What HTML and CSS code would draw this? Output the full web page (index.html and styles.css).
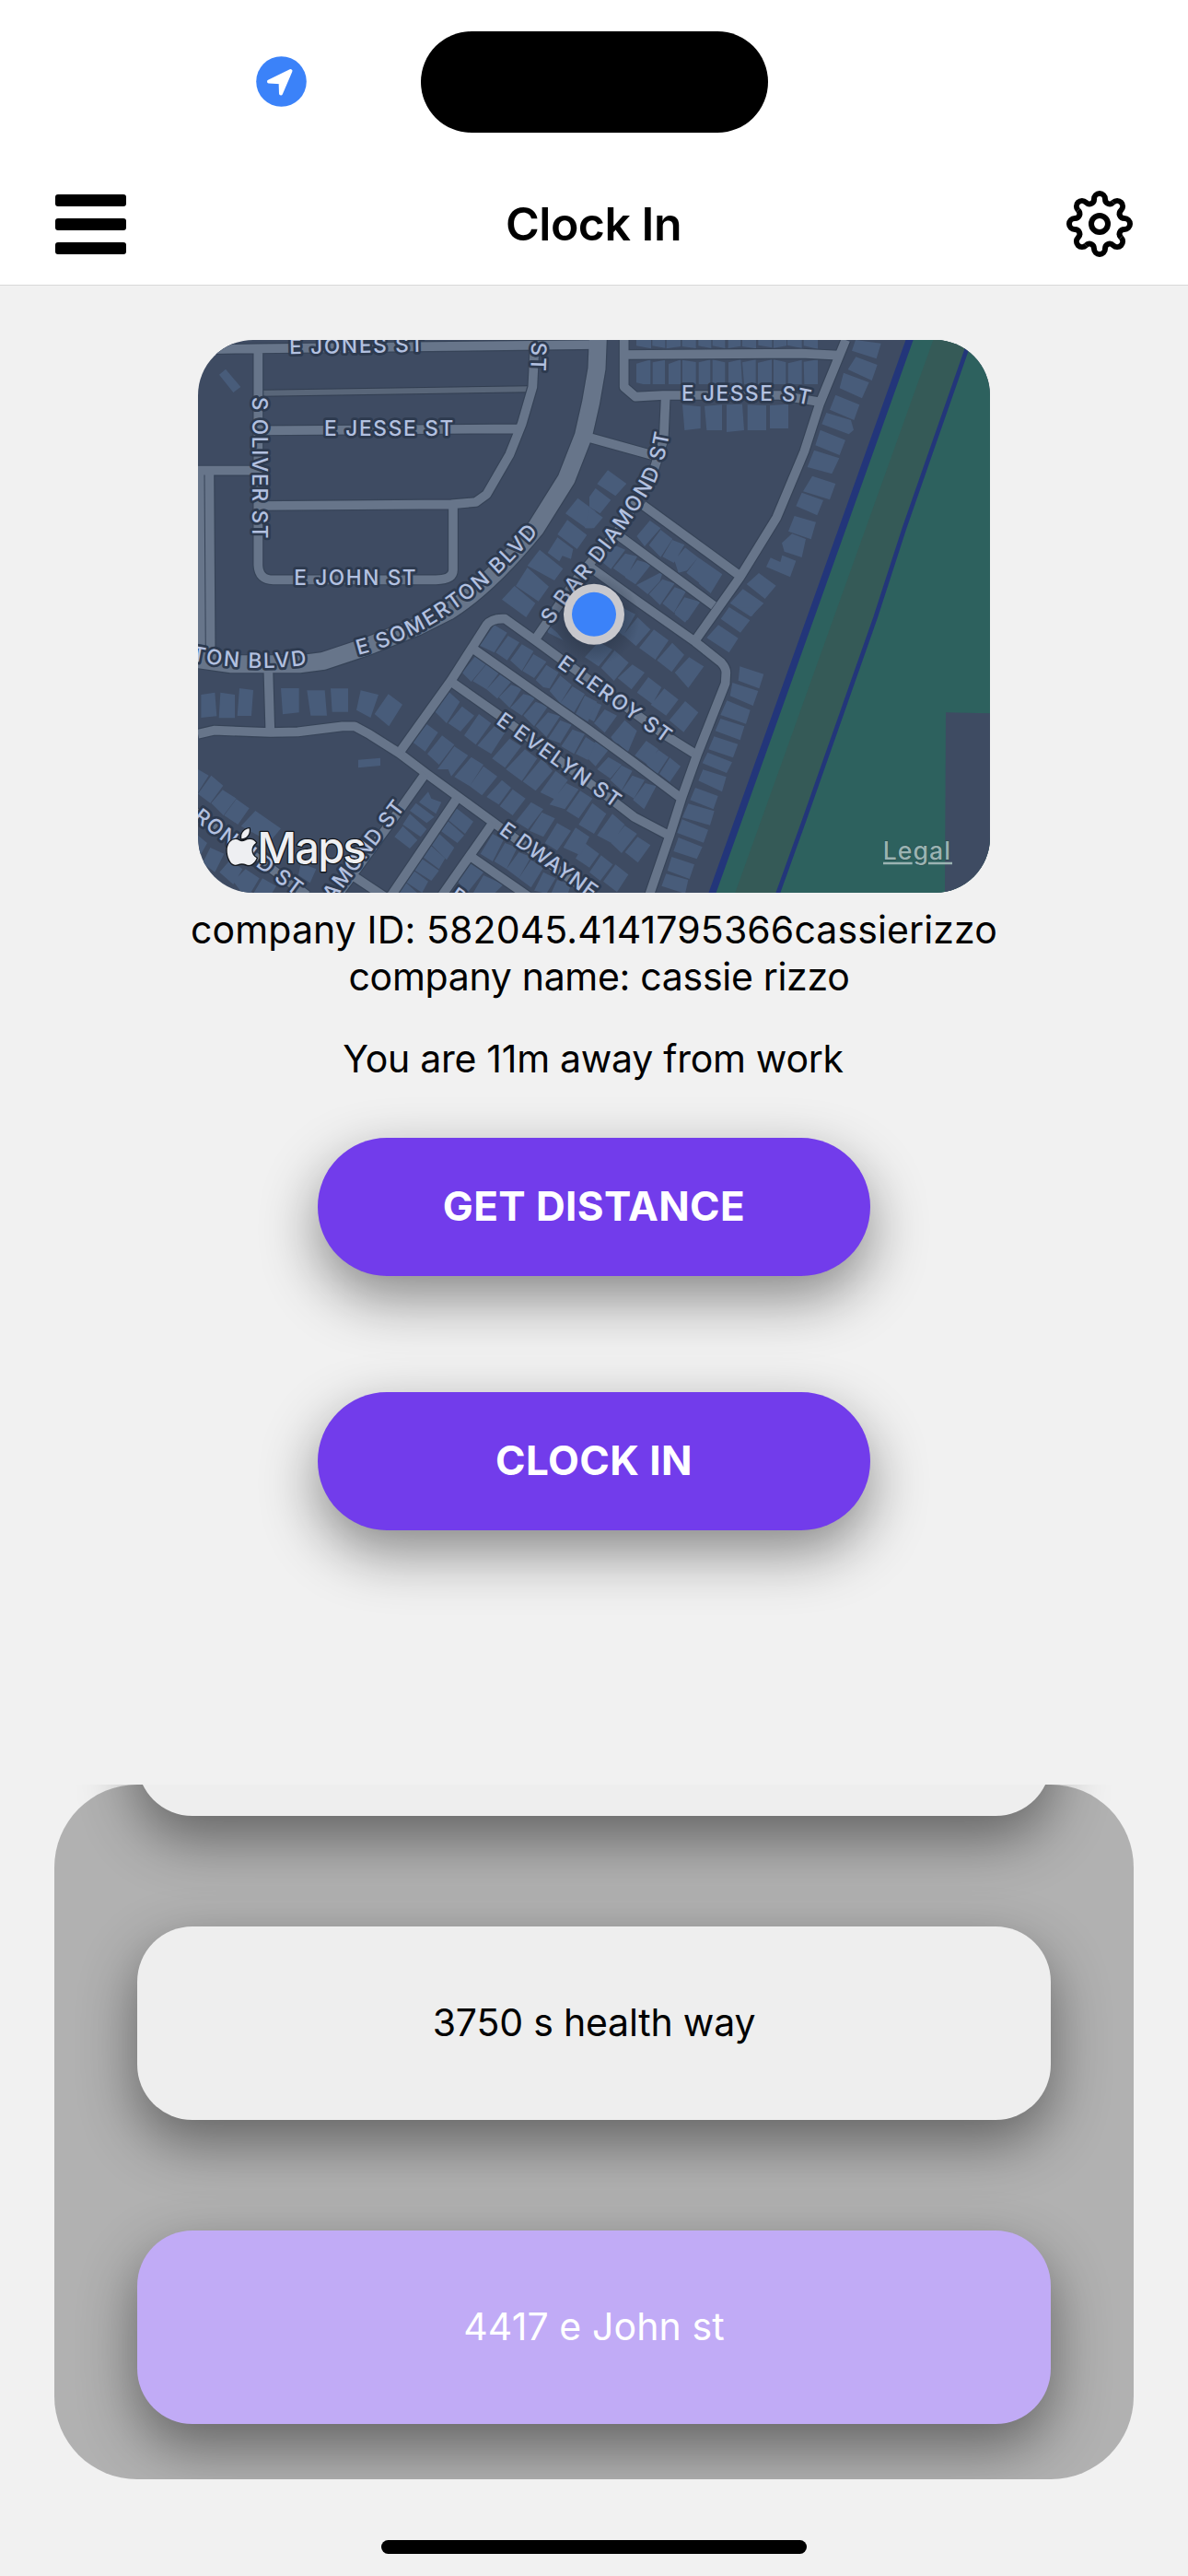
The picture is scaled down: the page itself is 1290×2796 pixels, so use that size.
FILE: index.html
```html
<!DOCTYPE html>
<html lang="en">
<head>
<meta charset="utf-8">
<title>Clock In</title>
<link rel="stylesheet" href="styles.css">
</head>
<body>
<div class="screen">
  <header class="top">
    <div class="status">
      <svg class="location" viewBox="0 0 55 55"><circle cx="27.5" cy="27.5" r="27.3"/><path d="M37.5 16 14 27.5 26.6 28.3 27 40.5Z"/></svg>
      <div class="island"></div>
    </div>
    <nav class="bar">
      <div class="menu"><span></span><span></span><span></span></div>
      <h1 class="title">Clock In</h1>
      <svg class="gear" viewBox="-36 -36 72 72">
        <defs><path id="tooth" d="M-6-27A6 6 0 0 1 6-27C6-22 11.4-19.8 14.9-23.3"/></defs>
        <use href="#tooth"/><use href="#tooth" transform="rotate(45)"/><use href="#tooth" transform="rotate(90)"/><use href="#tooth" transform="rotate(135)"/>
        <use href="#tooth" transform="rotate(180)"/><use href="#tooth" transform="rotate(225)"/><use href="#tooth" transform="rotate(270)"/><use href="#tooth" transform="rotate(315)"/>
        <circle r="9"/>
      </svg>
    </nav>
  </header>

  <main class="content">
    <svg class="map" viewBox="45 27 2580 1800">
      <defs>
        <g id="streets">
          <path d="M45 58 240 55 1348 42M241 60V760Q243 808 290 808H820Q876 808 876 775V565M241 322 1090 316M45 452H241M241 567 870 562 950 555 985 530 1060 400 1100 300 1135 180 1142 40"/>
          <path d="M82 462 86 1050M50 462 54 1050M274 1100 280 1300M45 1310 97 1298 280 1305 370 1303 515 1285H555L605 1312 700 1372 790 1440 1010 1600 1330 1835"/>
          <path d="M705 1365 870 1135 985 955Q1003 932 1045 935L1150 1010 1560 1310 1665 1375M1145 1000 1200 920 1290 790 1420 640 1530 450 1562 350 1568 215M1320 345 1525 402"/>
          <path d="M1433 27V180L1470 212 1560 207H1940L2065 228M1433 75 2010 71 2130 77M2155 27 2070 235 2020 390 1930 605 1810 800 1665 1005M1495 565 1810 795M1410 660 1725 892"/>
          <path d="M1320 765 1480 880 1665 1010 1750 1078Q1765 1095 1765 1110L1763 1145 1670 1380 1620 1520 1582 1640 1515 1835M945 1035 1320 1298 1460 1400 1620 1520M870 1140 1020 1245 1400 1530 1465 1580 1582 1642"/>
          <path d="M785 1440 700 1560 500 1835M885 1525 675 1835M1005 1600 840 1835M935 1710 1120 1838M30 1560 400 1835M555 1775 650 1838"/>
        </g>
        <path id="boulevard" d="M1348 20 1344 120 1325 230 1300 340 1245 480 1145 640Q990 830 860 910L760 960 590 1027 455 1072 380 1082H150L40 1066"/>
        <path id="p-jesse" d="M1620 224H1900Q1970 222 2050 243"/>
        <path id="p-somerton" d="M567 1053C760 1005 960 880 1160 645"/>
        <path id="p-blvd" d="M22 1071Q230 1113 420 1081"/>
        <path id="p-diamond" d="M1196 956 1259 868Q1444 650 1534 490 1570 410 1583 318"/>
        <radialGradient id="glow"><stop offset=".6" stop-color="#1d2838" stop-opacity=".32"/><stop offset="1" stop-color="#1d2838" stop-opacity="0"/></radialGradient>
      </defs>

      <rect class="land" x="45" y="27" width="2580" height="1800"/>
      <path class="park" d="M2363 27H2625V1827H1720Z"/>
      <path class="levee" d="M2440 27H2560L2447 350 2346 640 2250 930 2150 1220 2020 1590 1935 1827H1795Z"/>
      <path class="land" d="M2481 1240 2625 1243V1827H2478Z"/>
      <path class="canal wide" d="M2367 15 2046 916 1716 1840"/>
      <path class="canal" d="M2564 15 2447 350 2346 640 2252 930 2150 1220 2020 1590 1930 1840"/>

      <g class="buildings">
        <path d="M135 122 184 180 160 198 114 140ZM1282 542 1340 585 1330 640H1310L1242 592ZM1248 613 1312 662 1280 708 1216 660ZM1216 670 1267 708 1260 740 1232 730 1222 748 1184 720ZM1158 710 1234 772 1206 810 1118 762ZM1118 768 1188 830 1154 878 1080 828ZM1076 828 1144 884 1114 930 1035 872Z"/>
        <path transform="translate(1320)" d="M153 27H201V55L153 46ZM205 27H247V53L205 46ZM251 27H297V48L251 55ZM302 27H347V54L302 48ZM355 27H397V54L355 46ZM401 27H442V54L401 46ZM452 27H493V47L452 54ZM498 27H543V55L498 48ZM550 27H595V52L550 44ZM600 27H642V46L600 53ZM645 27H692V54L645 44ZM698 27H744V56L698 46ZM153 104 199 91V171H175L153 166ZM206 100 246 92V171H206ZM258 105 297 91V171H258ZM303 92 347 99V171H303ZM356 100 394 91V171H356ZM401 91 442 100V171H401ZM453 100 493 91 498 171 453 165ZM498 100 542 91V171H504ZM549 101 594 91V171H549ZM600 91 640 99V171H600ZM647 103 692 92V171H647ZM698 98 744 91V171H700Z"/>
        <path transform="translate(1320)" d="M303 238 362 244V315L310 321ZM375 242 432 238V321H382ZM447 238 498 236 504 321 447 327ZM515 238 576 240V321H515ZM588 240 648 236V315H588ZM867 27 950 38 935 88 855 62ZM868 82 938 108 920 159 842 123ZM828 134 911 165 888 217 815 184ZM802 206 880 238 862 288 783 254ZM772 264 852 288 861 320 845 334 757 301ZM752 320 834 353 815 402 736 370ZM732 386 814 412 790 463 710 441ZM726 470 802 495 783 547 696 520ZM692 524 762 549 742 598 673 568ZM668 600 738 620 722 676 648 650ZM660 658 705 675 692 735 635 716 627 688ZM590 736 622 750 628 728 673 746 654 799 576 766ZM552 786 608 827 572 870 512 822ZM500 838 568 884 525 928 458 884ZM60 451 121 495 85 535 25 496ZM20 510 70 548 35 592 0 570V538ZM0 572 44 605 15 640H-15Z"/>
        <path transform="translate(1320)" d="M197 615 232 640 180 699 154 666ZM232 645 271 675 232 734 194 695ZM270 678 310 694 275 753 238 733ZM312 703 354 735 318 778 290 785 277 745ZM354 735 388 758 358 818 316 785ZM388 758 433 790 395 852 356 820ZM70 690 117 710 70 773 35 745ZM117 722 156 732 120 800 77 770ZM156 744 202 757 150 823 116 800ZM240 780 230 812 190 855 153 825ZM238 806 278 820 230 890 194 855ZM278 832 315 845 275 915 238 885ZM310 865 361 880 320 940 276 915Z"/>
        <path transform="translate(1320 900)" d="M490 190 568 215 553 262 485 236ZM466 243 550 270 533 318 458 286ZM448 301 524 332 510 377 427 348ZM427 360 505 385 491 430 410 400ZM406 418 484 443 468 487 388 460ZM385 470 465 502 447 537 368 505ZM370 526 446 550 432 598 355 562ZM345 585 419 612 404 655 328 625ZM322 637 407 661 393 707 303 682ZM302 688 387 722 372 764 286 732ZM290 747 368 778 350 817 274 792ZM268 810 342 835 326 882 254 855ZM250 865 322 885 312 930 235 905ZM455-3 523 40 492 80 428 35ZM485-2H552L528 28ZM420 55 485 98 455 145 382 97ZM285 0H345L312 47 278 20Z"/>
        <path transform="translate(1320 900)" d="M157 30 199 70 152 124 110 88ZM110 0 150 20 110 90 75 60ZM210 70 258 105 215 168 162 130ZM270 113 309 152 268 208 220 170ZM325 160 373 190 322 260 278 210ZM30 110 75 135 30 190-15 160ZM82 138 128 178 80 237 38 195ZM140 184 180 210 137 265 92 228ZM192 225 235 258 205 312 155 275ZM244 262 290 298 250 350 200 315ZM312 303 355 340 307 404 260 365ZM0 300 40 315 15 370-20 350ZM50 330 90 350 50 406 15 375ZM115 365 155 400 125 470 92 440 88 450 70 420ZM185 432 225 460 190 510 148 480ZM225 462 258 485 220 543 186 510ZM262 487 297 515 262 566 228 540Z"/>
        <path transform="translate(1320 900)" d="M20 435 62 462 20 515-15 480ZM62 485 105 510 68 555 25 525ZM105 512 140 530 105 593 68 560ZM140 545 180 560 145 620 105 595ZM182 570 218 580 178 655 142 625ZM10 635 55 670 15 735-35 705ZM75 670 115 705 72 765 25 740ZM115 708 155 735 105 798 70 765ZM157 745 199 772 158 829 116 795ZM-15 765 32 800 0 845-45 815ZM38 805 76 835 35 888 0 860ZM85 835 127 868 90 925 45 890Z"/>
        <path transform="translate(0 900)" d="M55 282 100 275 106 352 55 357ZM118 275 165 282V358H113ZM180 261 225 267 219 351H173ZM315 261H374V340L321 346ZM400 268H458L465 350H412ZM477 262H534V338H482ZM575 268 633 282 607 357 561 332ZM665 280 711 314 667 385 620 345ZM567 494 639 488V513L567 520ZM45 525 80 545 45 600ZM88 545 127 578 85 635 45 605ZM125 592 170 620 128 675 88 635ZM170 622 212 652 175 705 130 675ZM232 660 275 690 240 740 185 710ZM275 690 315 718 280 760 240 740ZM45 740 75 765 50 810ZM85 780 130 800 100 860 60 830ZM150 820 190 850 160 900 115 860ZM200 850 245 880 215 930H190L160 890ZM255 880 300 905 285 930H225ZM380 830 430 850 410 895 372 870Z"/>
        <path transform="translate(0 900)" d="M1010 55 1052 80 1010 145 963 122ZM1055 90 1092 112 1052 170 1015 145ZM1100 118 1138 140 1100 205 1062 170ZM1138 150 1180 175 1140 228 1102 205ZM1180 185 1220 210 1190 262 1170 258 1145 235ZM1225 220 1262 250 1225 310 1190 270ZM1265 255 1305 280 1270 340 1225 310ZM1305 285 1345 305 1315 370 1275 345ZM950 155 985 180 935 240 905 210ZM985 182 1030 205 985 265 940 238ZM1030 215 1065 240 1020 295 985 265ZM1065 250 1100 262 1060 325 1025 290ZM1105 280 1145 290 1100 350 1062 325ZM1145 305 1185 320 1140 385 1105 350ZM1185 340 1225 352 1180 420 1145 385ZM1225 365 1262 380 1225 440 1185 425ZM1265 395 1305 410 1270 475 1228 450ZM1308 420 1340 440 1315 495 1275 475Z"/>
        <path transform="translate(0 900)" d="M862 272 898 305 855 375 815 335ZM905 320 945 350 900 402 860 375ZM960 345 1000 375 950 445 912 415ZM1010 385 1045 405 1000 475 955 448ZM1060 425 1098 450 1045 520 1003 490ZM1110 460 1150 490 1100 563 1048 525ZM1165 490 1200 530 1145 595 1103 565ZM1210 530 1250 560 1205 622 1160 600ZM1245 570 1285 590 1240 655 1190 640ZM1290 595 1330 620 1285 685 1245 660ZM790 378 827 405 785 467 742 435ZM840 415 880 445 830 510 792 475ZM880 450 925 480 870 548 860 525 825 525ZM935 485 975 510 930 580 880 550ZM975 515 1020 548 970 610 930 580ZM1035 560 1065 585 1025 640 985 615ZM1070 590 1112 620 1070 675 1028 645ZM1130 632 1170 655 1120 720 1080 695ZM1165 665 1208 685 1170 745 1125 725ZM1215 700 1260 725 1215 790 1175 765ZM1275 715 1320 745 1290 805 1235 780Z"/>
        <path transform="translate(0 900)" d="M795 598 805 620 838 632 820 670 765 632ZM755 635 815 680 790 700 735 660ZM735 670 790 720 770 745 712 705ZM712 710 760 755 735 783 685 745ZM885 650 942 695 915 735 860 690ZM855 690 912 740 890 765 835 725ZM825 730 880 780 855 820 800 765ZM800 770 850 815 830 850 770 805ZM765 810 830 855 805 888 745 850ZM740 850 795 890 775 927 720 890ZM720 892 760 928H685ZM1005 735 1040 755 1005 825 965 800ZM1045 765 1085 780 1050 850 1010 825ZM1090 795 1130 810 1090 880 1050 850ZM1130 820 1170 845 1130 910 1090 880ZM1170 860 1210 880 1180 930 1140 920ZM930 830 975 860 920 930 885 880ZM975 870 1040 900 1010 930H940ZM1215 885 1260 900 1250 930H1195ZM1175 45 1215 80 1235 105 1185 80Z"/>
      </g>

      <path class="alley-edge" d="M255 200 1125 187"/><path class="alley" d="M255 200 1125 187"/>
      <g class="casing"><use href="#streets"/><use class="blvd-casing" href="#boulevard"/></g>
      <g class="road"><use href="#streets"/><use class="blvd" href="#boulevard"/></g>

      <g class="labels">
        <text transform="translate(343 73) rotate(-1)" textLength="438">E JONES ST</text>
        <text transform="translate(1132 34) rotate(92)" textLength="94">ST</text>
        <text transform="translate(223 212) rotate(90)" textLength="462">S OLIVER ST</text>
        <text x="456" y="338" textLength="421">E JESSE ST</text>
        <text x="358" y="825" textLength="397">E JOHN ST</text>
        <text><textPath href="#p-jesse" textLength="418">E JESSE ST</textPath></text>
        <text><textPath href="#p-somerton" textLength="722">E SOMERTON BLVD</textPath></text>
        <text><textPath href="#p-blvd" textLength="380">TON BLVD</textPath></text>
        <text><textPath href="#p-diamond" textLength="742">S BAR DIAMOND ST</textPath></text>
        <text transform="translate(1213 1090) rotate(35.4)" textLength="434">E LEROY ST</text>
        <text transform="translate(1013 1275) rotate(35.5)" textLength="478">E EVELYN ST</text>
        <text transform="translate(1023 1632) rotate(35.6)" textLength="372">E DWAYNE</text>
        <text transform="translate(28 1587) rotate(36.8)" textLength="420">RONALD ST</text>
        <text transform="translate(484 1857) rotate(-52.5)" textLength="389">AMOND ST</text>
        <text transform="translate(862 1846) rotate(35)">R</text>
      </g>

      <circle class="marker-shadow" cx="1335" cy="935" r="150"/>
      <circle class="marker-ring" cx="1335" cy="920.5" r="99"/>
      <circle class="marker" cx="1335" cy="920.5" r="72"/>

      <g class="brand">
        <path d="M187 1651C184 1633 196 1620 212 1618 215 1635 204 1650 187 1651ZM188 1660C196 1660 202 1653 214 1653 223 1653 230 1658 234 1664 214 1678 217 1705 236 1714 231 1726 222 1737 211 1737 202 1737 199 1732 188 1732 177 1732 173 1737 165 1736 150 1735 140 1708 140 1690 140 1667 153 1653 168 1653 176 1653 182 1660 188 1660Z"/>
        <text x="238" y="1732" textLength="355">Maps</text>
      </g>
      <g class="legal">
        <text x="2276" y="1720" textLength="220">Legal</text>
        <path d="M2277 1731H2372M2424 1731H2502"/>
      </g>
    </svg>

    <div class="company">
      <p class="company-id">company ID: 582045.4141795366cassierizzo</p>
      <p class="company-name">company name: cassie rizzo</p>
    </div>
    <p class="distance">You are 11m away from work</p>
    <div class="actions">
      <button class="action">GET DISTANCE</button>
      <button class="action">CLOCK IN</button>
    </div>
  </main>

  <section class="places">
    <div class="panel">
      <div class="place"></div>
      <div class="place">3750 s health way</div>
      <div class="place selected">4417 e John st</div>
    </div>
  </section>
  <div class="home"></div>
</div>
</body>
</html>
```
FILE: styles.css
```css
* { box-sizing: border-box; }
body { margin: 0; background: #f1f1f1; color: #000; font-family: Inter, "Liberation Sans", sans-serif; }
p, h1 { margin: 0; }
.screen { width: 1290px; height: 2796px; overflow: hidden; display: flex; flex-direction: column; align-items: center; }

.top { width: 100%; height: 310px; background: #fff; border-bottom: 1px solid #d8d8d8; }
.status { height: 177px; padding: 34px 0 0 278px; display: flex; gap: 124px; }
.location { width: 55px; height: 55px; margin-top: 27px; }
.location circle { fill: #3b82f9; }
.location path { fill: #fff; stroke: #fff; stroke-width: 4; stroke-linejoin: round; }
.island { width: 377px; height: 110px; border-radius: 55px; background: #000; }
.bar { height: 131px; padding: 0 60px; display: grid; grid-template-columns: 77px 1fr 72px; align-items: center; }
.menu { display: flex; flex-direction: column; gap: 13px; padding-top: 2px; }
.menu span { height: 13px; border-radius: 3px; background: #000; }
.title { font-size: 50px; font-weight: 600; line-height: 60px; text-align: center; letter-spacing: -.5px; padding-right: 6px; }
.gear { width: 72px; height: 72px; fill: none; stroke: #000; stroke-width: 6; }

.content { display: flex; flex-direction: column; align-items: center; padding-top: 59px; }
.map { display: block; width: 860px; height: 600px; border-radius: 60px; overflow: hidden; }
.land { fill: #3e4b62; }
.park { fill: #2d615e; }
.levee { fill: #355a57; }
.canal { fill: none; stroke: #23367a; stroke-width: 14; }
.wide { stroke-width: 23; }
.buildings { fill: #485c7a; }
.casing, .road { fill: none; stroke-linejoin: round; }
.casing { stroke: #364357; stroke-width: 36; }
.road { stroke: #67758a; stroke-width: 29; }
.blvd-casing { stroke-width: 64; }
.blvd { stroke-width: 57; }
.alley-edge { stroke: #323e51; stroke-width: 24; }
.alley { stroke: #596679; stroke-width: 18; }
.labels { font-size: 68px; font-weight: 500; fill: #b3c1e0; stroke: #2d3a4f; stroke-width: 17; stroke-linejoin: round; paint-order: stroke; }
.marker-shadow { fill: url(#glow); }
.marker-ring { fill: #c8c8cd; }
.marker { fill: #3b82f9; }
.brand { fill: #eeeff2; stroke: #14181e; stroke-width: 8; stroke-linejoin: round; paint-order: stroke; font-size: 141px; font-weight: 500; }
.legal { fill: #9bb3b2; font-size: 80px; font-weight: 500; }
.legal text { stroke: #28504f; stroke-width: 4; paint-order: stroke; }
.legal path { stroke: #9bb3b2; stroke-width: 8; }

.company, .distance { font-size: 41px; line-height: 51px; text-align: center; white-space: nowrap; }
.company { padding-top: 15px; }
.company-id { letter-spacing: .12px; }
.company-name { padding-left: 11px; letter-spacing: -.3px; }
.distance { padding-top: 38px; padding-right: 2px; letter-spacing: -.27px; }
.actions { padding-top: 60px; display: flex; flex-direction: column; gap: 126px; }
.action { width: 600px; height: 150px; padding: 0 0 2px; border: 0; border-radius: 75px; background: #723ceb; color: #fff; font: 700 44px Inter, "Liberation Sans", sans-serif; letter-spacing: .4px; box-shadow: 0 24px 62px rgba(0, 0, 0, .44); }

.places { width: 1172px; height: 754px; margin-top: 276px; overflow: hidden; }
.panel { height: 754px; padding: 0 90px 60px; border-radius: 90px; background: #b1b1b1; display: flex; flex-direction: column; justify-content: flex-end; gap: 120px; }
.place { height: 210px; flex: none; padding-bottom: 2px; border-radius: 60px; background: #eee; font-size: 41px; letter-spacing: -.2px; display: flex; align-items: center; justify-content: center; box-shadow: 0 24px 62px rgba(0, 0, 0, .44); }
.selected { background: #c1abf6; color: #fff; letter-spacing: .1px; }
.home { width: 462px; height: 15px; margin-top: 66px; border-radius: 8px; background: #000; }
```
